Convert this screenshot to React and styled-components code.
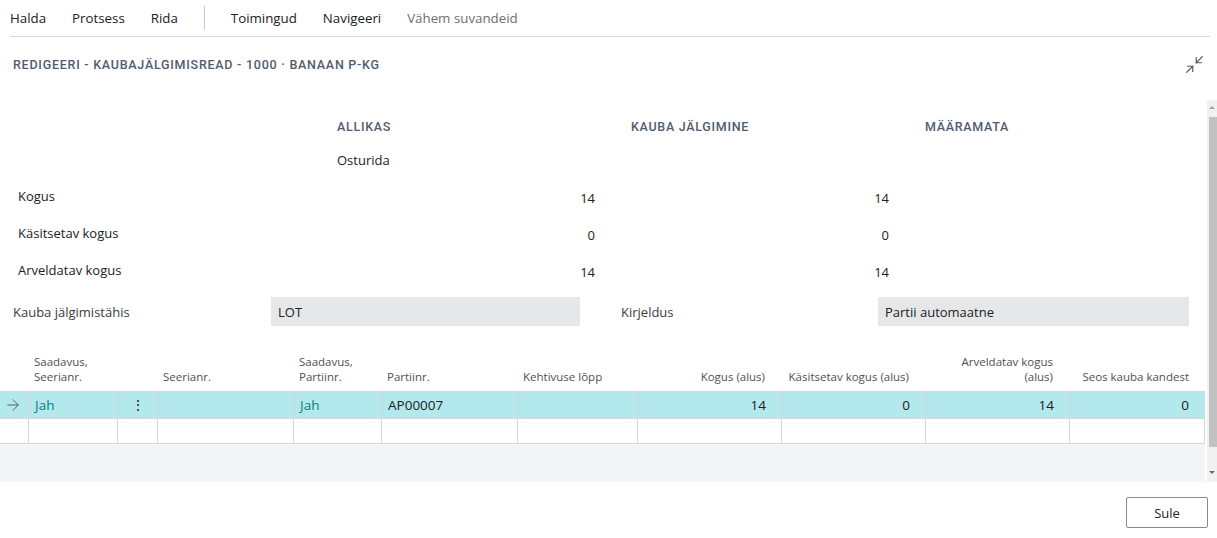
import React from 'react';
import styled, { createGlobalStyle } from 'styled-components';
import { Minimize2, ArrowRight } from 'lucide-react';

const GlobalStyle = createGlobalStyle`
  body {
    margin: 0;
    background: #fff;
    font-family: "Open Sans", "Noto Sans", sans-serif;
    color: #212121;
  }
`;

const Page = styled.div`
  width: 1217px;
  height: 538px;
  display: flex;
  flex-direction: column;
  overflow: hidden;
`;

const MenuBar = styled.div`
  display: flex;
  align-items: center;
  gap: 26px;
  height: 36px;
  margin: 0 7px 0 10px;
  border-bottom: 1px solid #d5d8dc;
  font-size: 13.3px;
`;

const MenuItem = styled.span`
  color: ${(p) => (p.$muted ? '#6e6e6e' : '#212121')};
  white-space: nowrap;
`;

const MenuDivider = styled.span`
  width: 1px;
  height: 24px;
  background: #c8c8c8;
`;

const TitleRow = styled.div`
  display: flex;
  align-items: center;
  justify-content: space-between;
  height: 55px;
  padding: 0 12px 0 13px;
`;

const Title = styled.h1`
  margin: 0;
  font-family: Roboto, "Liberation Sans", sans-serif;
  font-size: 12.5px;
  font-weight: 500;
  letter-spacing: 0.75px;
  text-transform: uppercase;
  color: #505c6d;
`;

const Body = styled.div`
  display: flex;
  margin-top: 8px;
  height: 382px;
`;

const Main = styled.div`
  width: 1205px;
  display: flex;
  flex-direction: column;
`;

const Scrollbar = styled.div`
  margin-left: 2px;
  width: 10px;
  background: #f1f1f1;
  display: flex;
  flex-direction: column;
  align-items: center;
`;

const Arrow = styled.span`
  width: 0;
  height: 0;
  border-left: 3px solid transparent;
  border-right: 3px solid transparent;
  ${(p) => (p.$down ? 'border-top: 3px solid #6a6a6a;' : 'border-bottom: 3px solid #a3a3a3;')}
  margin: ${(p) => (p.$down ? '24px 0 0' : '6px 0 8px')};
`;

const Thumb = styled.div`
  width: 8px;
  height: 330px;
  margin-left: 2px;
  background: #c1c1c1;
`;

const FieldGrid = styled.div`
  display: grid;
  grid-template-columns: 319px 258px 36px 258px 36px 265px;
  padding-left: 18px;
  margin-top: 9px;
  font-size: 13px;
`;

const Cell = styled.div`
  height: ${(p) => p.$h || 37}px;
  display: flex;
  align-items: center;
  justify-content: ${(p) => (p.$right ? 'flex-end' : 'flex-start')};
  padding-top: ${(p) => (p.$low ? 4 : 0)}px;
  box-sizing: border-box;
`;

const GroupHead = styled.span`
  font-family: Roboto, "Liberation Sans", sans-serif;
  font-size: 12.5px;
  font-weight: 500;
  letter-spacing: 0.7px;
  text-transform: uppercase;
  color: #505c6d;
`;

const InputRow = styled.div`
  display: grid;
  grid-template-columns: 258px 309px 41px 257px 311px;
  align-items: center;
  padding-left: 13px;
  margin-top: 9px;
  font-size: 13px;
`;

const InputLabel = styled.span`
  color: #3c3c3c;
`;

const InputBox = styled.div`
  height: 29px;
  background: #e6e7e9;
  display: flex;
  align-items: center;
  padding-left: 7px;
`;

const Table = styled.div`
  display: grid;
  grid-template-columns: 28px 89px 40px 136px 88px 136px 120px 144px 144px 144px 136px;
  margin-top: 20px;
`;

const Th = styled.div`
  height: 46px;
  box-sizing: border-box;
  padding: 0 16px 7px 6px;
  display: flex;
  align-items: flex-end;
  justify-content: ${(p) => (p.$right ? 'flex-end' : 'flex-start')};
  text-align: ${(p) => (p.$right ? 'right' : 'left')};
  font-size: 11.5px;
  line-height: 15px;
  color: #505050;
  border-bottom: 1px solid #d6d6d6;
`;

const Td = styled.div`
  height: ${(p) => (p.$active ? 27 : 25)}px;
  box-sizing: border-box;
  display: flex;
  align-items: center;
  justify-content: ${(p) => (p.$right ? 'flex-end' : p.$center ? 'center' : 'flex-start')};
  padding: ${(p) => (p.$right ? '0 15px 0 6px' : p.$first ? '0 0 0 4px' : '0 6px')};
  background: ${(p) => (p.$active ? '#b3e9ec' : '#fff')};
  border-bottom: 1px solid #d6d6d6;
  border-left: ${(p) => (p.$first ? 'none' : '1px solid #d6d6d6')};
  border-right: ${(p) => (p.$last ? '1px solid #d6d6d6' : 'none')};
  font-size: 13.5px;
  color: ${(p) => (p.$link ? '#0e7c80' : '#212121')};
`;

const Filler = styled.div`
  flex: 1;
  background: #f4f5f6;
`;

const Footer = styled.div`
  display: flex;
  justify-content: flex-end;
  padding: 15px 9px 0 0;
`;

const Button = styled.button`
  width: 82px;
  height: 31px;
  background: #fff;
  border: 1px solid #8a8a8a;
  border-radius: 2px;
  font-family: "Open Sans", "Noto Sans", sans-serif;
  font-size: 13px;
  color: #212121;
`;

const IconWrap = styled.span`
  display: flex;
  color: ${(p) => p.$color || '#5a5a5a'};
`;

const columns = [
  { label: '' },
  { label: ['Saadavus,', 'Seerianr.'] },
  { label: '' },
  { label: 'Seerianr.' },
  { label: ['Saadavus,', 'Partiinr.'] },
  { label: 'Partiinr.' },
  { label: 'Kehtivuse lõpp' },
  { label: 'Kogus (alus)', right: true },
  { label: 'Käsitsetav kogus (alus)', right: true },
  { label: ['Arveldatav kogus', '(alus)'], right: true },
  { label: 'Seos kauba kandest', right: true },
];

const row = ['', 'Jah', '⋮', '', 'Jah', 'AP00007', '', '14', '0', '14', '0'];

const quantities = [
  { label: 'Kogus', a: '14', b: '14' },
  { label: 'Käsitsetav kogus', a: '0', b: '0' },
  { label: 'Arveldatav kogus', a: '14', b: '14' },
];

function HeaderText({ label }) {
  if (Array.isArray(label)) {
    return (
      <span>
        {label[0]}
        <br />
        {label[1]}
      </span>
    );
  }
  return <span>{label}</span>;
}

export default function App() {
  return (
    <Page>
      <GlobalStyle />
      <MenuBar>
        <MenuItem>Halda</MenuItem>
        <MenuItem>Protsess</MenuItem>
        <MenuItem>Rida</MenuItem>
        <MenuDivider />
        <MenuItem>Toimingud</MenuItem>
        <MenuItem>Navigeeri</MenuItem>
        <MenuItem $muted>Vähem suvandeid</MenuItem>
      </MenuBar>

      <TitleRow>
        <Title>Redigeeri - Kaubajälgimisread - 1000 · Banaan P-KG</Title>
        <IconWrap>
          <Minimize2 size={21} strokeWidth={1.4} />
        </IconWrap>
      </TitleRow>

      <Body>
        <Main>
          <FieldGrid>
            <Cell $h={34} />
            <Cell $h={34}><GroupHead>Allikas</GroupHead></Cell>
            <Cell $h={34} />
            <Cell $h={34}><GroupHead>Kauba jälgimine</GroupHead></Cell>
            <Cell $h={34} />
            <Cell $h={34}><GroupHead>Määramata</GroupHead></Cell>

            <Cell $h={34} />
            <Cell $h={34}>Osturida</Cell>
            <Cell $h={34} />
            <Cell $h={34} />
            <Cell $h={34} />
            <Cell $h={34} />

            {quantities.map((q) => (
              <React.Fragment key={q.label}>
                <Cell>{q.label}</Cell>
                <Cell $right $low>{q.a}</Cell>
                <Cell />
                <Cell $right $low>{q.b}</Cell>
                <Cell />
                <Cell />
              </React.Fragment>
            ))}
          </FieldGrid>

          <InputRow>
            <InputLabel>Kauba jälgimistähis</InputLabel>
            <InputBox>LOT</InputBox>
            <span />
            <InputLabel>Kirjeldus</InputLabel>
            <InputBox>Partii automaatne</InputBox>
          </InputRow>

          <Table>
            {columns.map((c, i) => (
              <Th key={'h' + i} $right={c.right}>
                <HeaderText label={c.label} />
              </Th>
            ))}
            {row.map((v, i) => (
              <Td
                key={'r' + i}
                $active
                $first={i === 0}
                $last={i === row.length - 1}
                $right={columns[i].right}
                $center={i === 2}
                $link={i === 1 || i === 4}
              >
                {i === 0 ? (
                  <IconWrap $color="#444">
                    <ArrowRight size={18} strokeWidth={1.1} />
                  </IconWrap>
                ) : (
                  v
                )}
              </Td>
            ))}
            {row.map((_, i) => (
              <Td key={'e' + i} $first={i === 0} $last={i === row.length - 1} />
            ))}
          </Table>
          <Filler />
        </Main>
        <Scrollbar>
          <Arrow />
          <Thumb />
          <Arrow $down />
        </Scrollbar>
      </Body>

      <Footer>
        <Button>Sule</Button>
      </Footer>
    </Page>
  );
}
